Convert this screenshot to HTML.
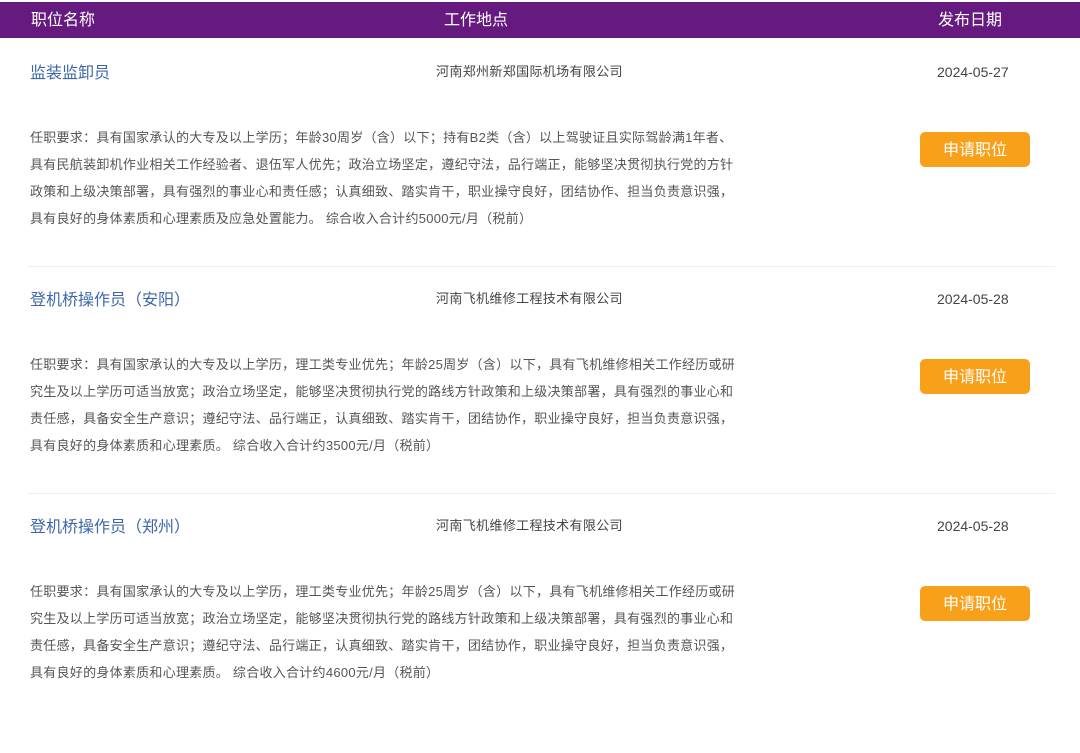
<!DOCTYPE html>
<html><head><meta charset="utf-8">
<style>
*{margin:0;padding:0;box-sizing:border-box}
body{width:1080px;height:712px;background:#fff;font-family:"Liberation Sans","Noto Sans CJK SC",sans-serif;position:relative;overflow:hidden}
.hd{position:absolute;left:0;top:2px;width:1080px;height:36px;background:#661a7f;color:#fff;font-size:16px}
.hd span{position:absolute;top:9px;line-height:20px}
.row{position:absolute;left:0;width:1080px;height:227px}
.t{position:absolute;left:30px;top:-8px;line-height:20px;font-size:16px;color:#3d68a6}
.c{position:absolute;left:436px;top:-10px;line-height:20px;font-size:13px;color:#444;letter-spacing:0.35px}
.d{position:absolute;left:937px;top:-10px;line-height:20px;font-size:14px;color:#444}
.desc{position:absolute;left:30px;top:52px;font-size:13px;line-height:27px;color:#555;white-space:nowrap;letter-spacing:0.27px}
.btn{position:absolute;left:920px;top:60px;width:110px;height:35px;border-radius:5px;background:#f9a01b;color:#fff;font-size:16px;text-align:center;line-height:37px}
.sep{position:absolute;left:28px;top:194px;width:1027px;height:1px;background:#eee}
</style></head><body>
<div class="hd"><span style="left:31px">职位名称</span><span style="left:444px">工作地点</span><span style="left:938px">发布日期</span></div>

<div class="row" style="top:72px">
<div class="t">监装监卸员</div>
<div class="c">河南郑州新郑国际机场有限公司</div>
<div class="d">2024-05-27</div>
<div class="desc">任职要求：具有国家承认的大专及以上学历；年龄30周岁（含）以下；持有B2类（含）以上驾驶证且实际驾龄满1年者、<br>具有民航装卸机作业相关工作经验者、退伍军人优先；政治立场坚定，遵纪守法，品行端正，能够坚决贯彻执行党的方针<br>政策和上级决策部署，具有强烈的事业心和责任感；认真细致、踏实肯干，职业操守良好，团结协作、担当负责意识强，<br>具有良好的身体素质和心理素质及应急处置能力。 综合收入合计约5000元/月（税前）</div>
<div class="btn">申请职位</div>
<div class="sep"></div>
</div>

<div class="row" style="top:299px">
<div class="t">登机桥操作员（安阳）</div>
<div class="c">河南飞机维修工程技术有限公司</div>
<div class="d">2024-05-28</div>
<div class="desc">任职要求：具有国家承认的大专及以上学历，理工类专业优先；年龄25周岁（含）以下，具有飞机维修相关工作经历或研<br>究生及以上学历可适当放宽；政治立场坚定，能够坚决贯彻执行党的路线方针政策和上级决策部署，具有强烈的事业心和<br>责任感，具备安全生产意识；遵纪守法、品行端正，认真细致、踏实肯干，团结协作，职业操守良好，担当负责意识强，<br>具有良好的身体素质和心理素质。 综合收入合计约3500元/月（税前）</div>
<div class="btn">申请职位</div>
<div class="sep"></div>
</div>

<div class="row" style="top:526px">
<div class="t">登机桥操作员（郑州）</div>
<div class="c">河南飞机维修工程技术有限公司</div>
<div class="d">2024-05-28</div>
<div class="desc">任职要求：具有国家承认的大专及以上学历，理工类专业优先；年龄25周岁（含）以下，具有飞机维修相关工作经历或研<br>究生及以上学历可适当放宽；政治立场坚定，能够坚决贯彻执行党的路线方针政策和上级决策部署，具有强烈的事业心和<br>责任感，具备安全生产意识；遵纪守法、品行端正，认真细致、踏实肯干，团结协作，职业操守良好，担当负责意识强，<br>具有良好的身体素质和心理素质。 综合收入合计约4600元/月（税前）</div>
<div class="btn">申请职位</div>
</div>
</body></html>
